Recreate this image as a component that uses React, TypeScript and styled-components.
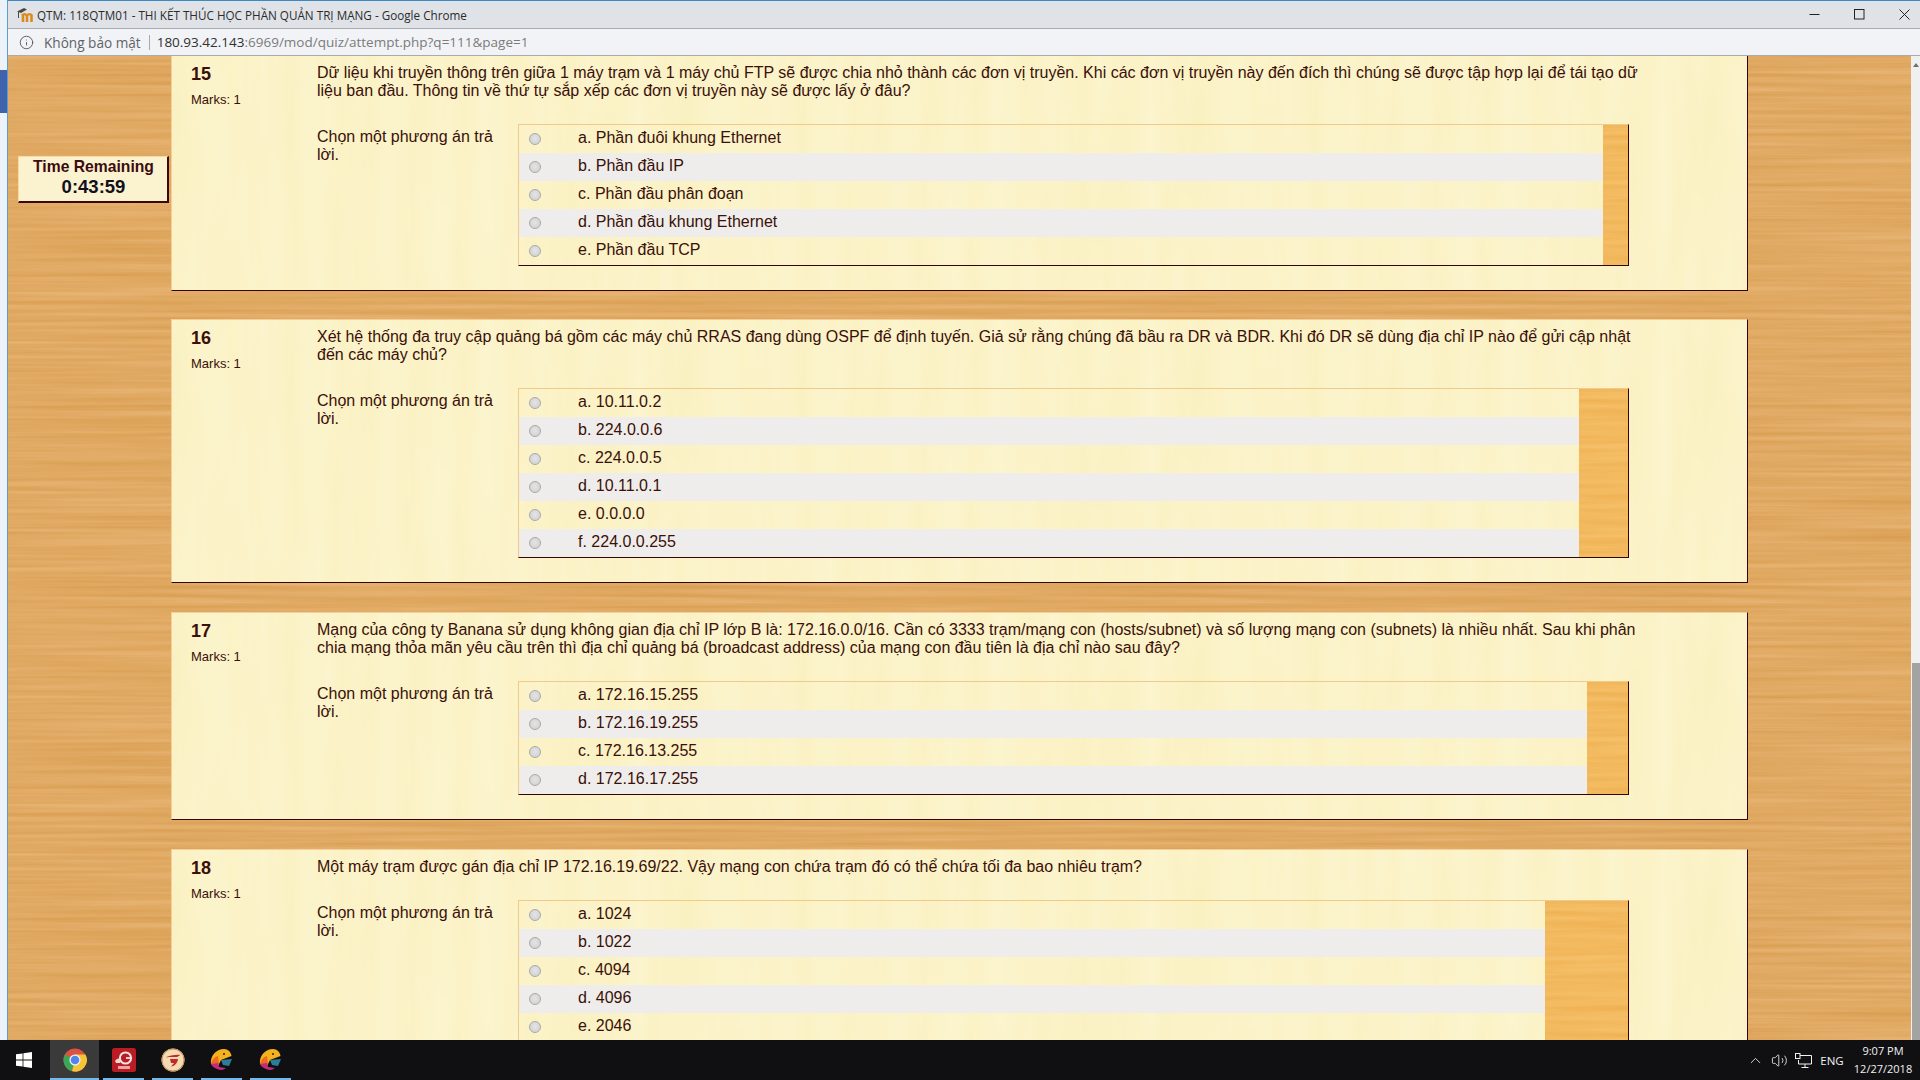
import styled, { createGlobalStyle } from "styled-components";
import { ChevronUp, Info, Volume2 } from "lucide-react";

const svgTexture = (size: number, freq: string, matrix: string, seed: number) =>
  `data:image/svg+xml,${encodeURIComponent(
    `<svg xmlns="http://www.w3.org/2000/svg" width="${size}" height="${size}"><filter id="n" color-interpolation-filters="sRGB" x="0" y="0" width="100%" height="100%"><feTurbulence type="fractalNoise" baseFrequency="${freq}" numOctaves="3" seed="${seed}" stitchTiles="stitch"/><feColorMatrix values="${matrix}"/></filter><rect width="100%" height="100%" filter="url(#n)"/></svg>`
  )}`;

const woodTexture = svgTexture(
  512,
  "0.004 0.22",
  "0.08 0 0 0 0.84  0.12 0 0 0 0.605  0.18 0 0 0 0.3  0 0 0 0 1",
  4
);
const paperTexture = svgTexture(
  512,
  "0.04 0.004",
  "0.012 0 0 0 0.978  0.025 0 0 0 0.938  0.07 0 0 0 0.75  0 0 0 0 1",
  9
);
const fillerTexture = svgTexture(
  256,
  "0.006 0.2",
  "0.04 0 0 0 0.93  0.08 0 0 0 0.685  0.12 0 0 0 0.31  0 0 0 0 1",
  2
);

const GlobalStyle = createGlobalStyle`
  html, body {
    margin: 0;
    padding: 0;
    height: 100%;
    overflow: hidden;
    background: #101012;
  }
`;

const Screen = styled.div`
  width: 1920px;
  height: 1080px;
  display: flex;
  flex-direction: column;
  overflow: hidden;
  font-family: "Liberation Sans", Arial, sans-serif;
`;

const Desk = styled.div`
  flex: 1;
  min-height: 0;
  display: flex;
`;

const DesktopStrip = styled.div`
  width: 7px;
  flex: none;
  background: #edf2f8;
`;

const DesktopPatch = styled.div`
  height: 43px;
  margin-top: 70px;
  background: #3f63ad;
`;

const Window = styled.div`
  flex: 1;
  min-width: 0;
  display: flex;
  flex-direction: column;
  border-top: 1px solid #3b8ac4;
  border-left: 1px solid #5b9fd0;
`;

const TitleBar = styled.div`
  height: 27px;
  flex: none;
  display: flex;
  align-items: center;
  padding-left: 9px;
  background: #dfe3e8;
  border-bottom: 1px solid #a9adb2;
`;

const TitleText = styled.span`
  margin-left: 3px;
  font: 11.7px "Open Sans", sans-serif;
  color: #2b2b2b;
`;

const WindowControls = styled.div`
  margin-left: auto;
  display: flex;
  gap: 13px;
`;

const ControlButton = styled.div`
  width: 32px;
  height: 27px;
  display: flex;
  align-items: center;
  justify-content: center;
`;

const AddressBar = styled.div`
  height: 26px;
  flex: none;
  display: flex;
  align-items: center;
  padding-left: 11px;
  background: #f1f3f6;
  border-bottom: 1px solid #a9abae;
  color: #5f6368;
`;

const SecurityLabel = styled.span`
  margin-left: 10px;
  font: 13.6px "Open Sans", sans-serif;
  color: #5f6368;
`;

const AddressDivider = styled.span`
  width: 1px;
  height: 15px;
  margin: 0 7px 0 8px;
  background: #a8a8a8;
`;

const Url = styled.span`
  font: 13.5px "Open Sans", sans-serif;
  color: #7b7b7b;

  b {
    font-weight: 400;
    color: #303030;
  }
`;

const Viewport = styled.div`
  flex: 1;
  min-height: 0;
  display: flex;
`;

const Page = styled.div`
  position: relative;
  flex: 1;
  min-width: 0;
  overflow: hidden;
  background: #dfa860 url("${woodTexture}");
`;

const Scrollbar = styled.div`
  width: 9px;
  flex: none;
  display: flex;
  flex-direction: column;
  background: #f0f0f0;
`;

const ScrollArrow = styled.div`
  margin: 7px 0 0 2px;
  width: 0;
  height: 0;
  border-left: 3px solid transparent;
  border-right: 3px solid transparent;
  border-bottom: 4px solid #707070;
`;

const ScrollThumb = styled.div`
  margin: auto 0 0 1px;
  height: 377px;
  background: #a3a3a3;
`;

const TimerBox = styled.div`
  position: absolute;
  left: 10px;
  top: 100px;
  width: 151px;
  height: 47px;
  box-sizing: border-box;
  display: flex;
  flex-direction: column;
  align-items: center;
  background: #fbf2cf;
  border-top: 1px solid #f7d9a4;
  border-left: 1px solid #f7d9a4;
  border-right: 2px solid #3c0806;
  border-bottom: 2px solid #3c0806;
  font-weight: 700;
`;

const TimerLabel = styled.div`
  margin: 1px 0 0 1px;
  font-size: 15.7px;
  line-height: 18px;
  color: #3c0c10;
`;

const TimerValue = styled.div`
  margin-left: 1px;
  font-size: 18.5px;
  line-height: 22px;
  color: #101020;
`;

const QuestionList = styled.div`
  display: flex;
  flex-direction: column;
  gap: 29px;
  margin: -1px 0 0 163px;
  width: 1577px;
`;

const Card = styled.section`
  display: flex;
  flex: none;
  padding: 8px 0 24px;
  background: #fbf3c8 url("${paperTexture}");
  border-top: 1px solid #f6cf96;
  border-left: 1px solid #f6cf96;
  border-right: 1px solid #340406;
  border-bottom: 1px solid #340406;
  color: #3a1008;

  &:first-child {
    margin-bottom: -1px;
  }
`;

const CardInfo = styled.div`
  width: 145px;
  flex: none;
  padding-left: 19px;
  box-sizing: border-box;
`;

const Number = styled.div`
  margin-top: -1px;
  font-size: 18px;
  font-weight: 700;
  line-height: 22px;
`;

const Marks = styled.div`
  margin-top: 8px;
  font-size: 13px;
  line-height: 14px;
`;

const CardBody = styled.div`
  flex: 1;
  min-width: 0;
`;

const QuestionText = styled.div<{ $lines: number }>`
  width: 1325px;
  font-size: 16px;
  line-height: 18px;
  min-height: ${(p) => p.$lines * 18}px;
  margin-bottom: 24px;
`;

const AnswerArea = styled.div`
  display: flex;
`;

const Prompt = styled.div`
  width: 201px;
  flex: none;
  box-sizing: border-box;
  padding: 4px 16px 0 0;
  font-size: 16px;
  line-height: 18px;
`;

const AnswerBox = styled.div`
  width: 1111px;
  flex: none;
  display: flex;
  box-sizing: border-box;
  border-top: 1px solid #f3c988;
  border-left: 1px solid #f3c988;
  border-right: 1px solid #340406;
  border-bottom: 1px solid #340406;
`;

const AnswerRows = styled.div<{ $width: number }>`
  width: ${(p) => p.$width}px;
  flex: none;
`;

const AnswerFiller = styled.div`
  flex: 1;
  background: #f2b95f url("${fillerTexture}");
`;

const AnswerRow = styled.div<{ $shaded: boolean }>`
  height: 28px;
  box-sizing: border-box;
  padding-bottom: 2px;
  display: flex;
  align-items: center;
  font-size: 16px;
  background: ${(p) => (p.$shaded ? "#efedeb" : "transparent")};
`;

const Radio = styled.span`
  width: 12px;
  height: 12px;
  margin: 1px 37px 0 10px;
  flex: none;
  box-sizing: border-box;
  border-radius: 50%;
  border: 1px solid #a9a9a9;
  background: radial-gradient(circle at 50% 45%, #e4e4e4, #cfcfcf);
`;

const Taskbar = styled.div`
  height: 40px;
  flex: none;
  display: flex;
  align-items: stretch;
  background: #101012;
  color: #f2f2f2;
`;

const StartButton = styled.div`
  width: 50px;
  flex: none;
  display: flex;
  align-items: center;
  justify-content: center;
  padding-right: 3px;
  box-sizing: border-box;
`;

const TaskItem = styled.div<{ $active?: boolean }>`
  position: relative;
  width: 49px;
  flex: none;
  display: flex;
  align-items: center;
  justify-content: center;
  background: ${(p) => (p.$active ? "#3a3a3a" : "transparent")};

  &::after {
    content: "";
    position: absolute;
    bottom: 0;
    height: 2px;
    left: ${(p) => (p.$active ? 0 : "4px")};
    right: ${(p) => (p.$active ? 0 : "4px")};
    background: #76b9ed;
  }
`;

const Tray = styled.div`
  margin-left: auto;
  display: flex;
  align-items: center;
  padding-right: 5px;
`;

const TraySlot = styled.div<{ $width: number }>`
  width: ${(p) => p.$width}px;
  display: flex;
  justify-content: center;
  align-items: center;
`;

const Lang = styled.span`
  font: 11.5px "Open Sans", sans-serif;
`;

const Clock = styled.div`
  width: 64px;
  margin-left: 2px;
  text-align: center;
  font: 11px/18px "Open Sans", sans-serif;
`;

type QuestionData = {
  number: number;
  text: string;
  lines: number;
  rowsWidth: number;
  answers: string[];
};

const QUESTIONS: QuestionData[] = [
  {
    number: 15,
    text: "Dữ liệu khi truyền thông trên giữa 1 máy trạm và 1 máy chủ FTP sẽ được chia nhỏ thành các đơn vị truyền. Khi các đơn vị truyền này đến đích thì chúng sẽ được tập hợp lại để tái tạo dữ liệu ban đầu. Thông tin về thứ tự sắp xếp các đơn vị truyền này sẽ được lấy ở đâu?",
    lines: 2,
    rowsWidth: 1084,
    answers: [
      "a. Phần đuôi khung Ethernet",
      "b. Phần đầu IP",
      "c. Phần đầu phân đoạn",
      "d. Phần đầu khung Ethernet",
      "e. Phần đầu TCP",
    ],
  },
  {
    number: 16,
    text: "Xét hệ thống đa truy cập quảng bá gồm các máy chủ RRAS đang dùng OSPF để định tuyến. Giả sử rằng chúng đã bầu ra DR và BDR. Khi đó DR sẽ dùng địa chỉ IP nào để gửi cập nhật đến các máy chủ?",
    lines: 2,
    rowsWidth: 1060,
    answers: ["a. 10.11.0.2", "b. 224.0.0.6", "c. 224.0.0.5", "d. 10.11.0.1", "e. 0.0.0.0", "f. 224.0.0.255"],
  },
  {
    number: 17,
    text: "Mạng của công ty Banana sử dụng không gian địa chỉ IP lớp B là: 172.16.0.0/16. Cần có 3333 trạm/mạng con (hosts/subnet) và số lượng mạng con (subnets) là nhiều nhất. Sau khi phân chia mạng thỏa mãn yêu cầu trên thì địa chỉ quảng bá (broadcast address) của mạng con đầu tiên là địa chỉ nào sau đây?",
    lines: 2,
    rowsWidth: 1068,
    answers: ["a. 172.16.15.255", "b. 172.16.19.255", "c. 172.16.13.255", "d. 172.16.17.255"],
  },
  {
    number: 18,
    text: "Một máy trạm được gán địa chỉ IP 172.16.19.69/22. Vậy mạng con chứa trạm đó có thể chứa tối đa bao nhiêu trạm?",
    lines: 1,
    rowsWidth: 1026,
    answers: ["a. 1024", "b. 1022", "c. 4094", "d. 4096", "e. 2046"],
  },
];

const MoodleLogo = () => (
  <svg width="17" height="16" viewBox="0 0 17 16">
    <path d="M6 7v8M10 8v7M14.5 8v7" stroke="#dd8a1c" strokeWidth="2.6" fill="none" />
    <path d="M5 8.5c1.5-1.8 3.5-1.8 5 0 1.5-1.800 3.500-1.800 5 0" stroke="#dd8a1c" strokeWidth="2.2" fill="none" />
    <path d="M0 4.5l7-3.5 3 1.5L4 6z" fill="#4a4a44" />
    <path d="M1.5 5v6" stroke="#4a4a44" strokeWidth="1" />
  </svg>
);

const MinimizeIcon = () => (
  <svg width="11" height="11" viewBox="0 0 11 11">
    <path d="M0.5 5.5h10" stroke="#222" fill="none" />
  </svg>
);

const MaximizeIcon = () => (
  <svg width="11" height="11" viewBox="0 0 11 11">
    <rect x="0.5" y="0.5" width="9.5" height="9.5" stroke="#222" fill="none" />
  </svg>
);

const CloseIcon = () => (
  <svg width="11" height="11" viewBox="0 0 11 11">
    <path d="M0.5 0.5l10 10M10.5 0.5l-10 10" stroke="#222" fill="none" />
  </svg>
);

const WindowsLogo = () => (
  <svg width="16" height="16" viewBox="0 0 16 16">
    <path d="M0 2.3l6.6-.9v6.2H0zM7.4 1.3L16 0v7.6H7.4zM0 8.4h6.6v6.2L0 13.7zM7.4 8.4H16V16l-8.6-1.3z" fill="#fff" />
  </svg>
);

const ChromeIcon = () => (
  <svg width="24" height="24" viewBox="0 0 24 24">
    <circle cx="12" cy="12" r="11.5" fill="#dd5144" />
    <path d="M12 12L1.9 6.6A11.5 11.5 0 0 0 9 23.100z" fill="#3aa757" />
    <path d="M12 6.5h10.4A11.5 11.5 0 0 1 9 23.100L12 12z" fill="#f4c534" />
    <circle cx="12" cy="12" r="5.6" fill="#f1f1f1" />
    <circle cx="12" cy="12" r="4.3" fill="#4f86ec" />
  </svg>
);

const GarenaTile = () => (
  <svg width="24" height="24" viewBox="0 0 24 24">
    <rect width="24" height="24" rx="2.5" fill="#b91c22" />
    <circle cx="13.5" cy="10" r="5.6" fill="none" stroke="#f5e6e6" strokeWidth="2" />
    <path d="M14 10h5" stroke="#f5e6e6" strokeWidth="1.8" />
    <path d="M3 13c2-3 4-3 6-2l-1 4H4z" fill="#f0d8d8" />
    <rect x="6" y="18" width="12" height="3" fill="#e9a5a5" />
  </svg>
);

const GarenaRound = () => (
  <svg width="24" height="24" viewBox="0 0 24 24">
    <circle cx="12" cy="12" r="11.5" fill="#f3dcb4" />
    <circle cx="12" cy="12" r="11" fill="none" stroke="#c58f4c" strokeWidth="1" />
    <path d="M4.5 9.5c4-2 10-3 15-2.5l-3.5 2H8z" fill="#c22a2a" />
    <path d="M9 11h8c-.5 4-3 7-7 7.5l3-3.5h-3z" fill="#c22a2a" />
  </svg>
);

const BuddyIcon = () => (
  <svg width="24" height="24" viewBox="0 0 24 24">
    <path d="M1 16C0 8 6 1 14 1c4 0 7 3 7.5 7L11 12l-3 6z" fill="#f5b21c" />
    <path d="M1 16c.5-3 3-7 7-8l1 8-3 4z" fill="#ef6a20" />
    <path d="M5 20c-2-1-3-2-4-4l7-1 1 4 7 1c-3 3-8 2-11 0z" fill="#c32c7c" />
    <path d="M11 12l11-1-3 7-6-1z" fill="#2b7d9a" />
    <circle cx="14" cy="6" r="1" fill="#222" />
  </svg>
);

const NetworkIcon = () => (
  <svg width="17" height="15" viewBox="0 0 17 15" fill="none" stroke="#f2f2f2">
    <path d="M4.5 2.5h12V11h-13V7" />
    <path d="M10 11v3M6.5 14.5h7" />
    <rect x="0.5" y="0.5" width="4.5" height="5" fill="#101012" />
  </svg>
);

const Question = ({ number, text, lines, rowsWidth, answers }: QuestionData) => (
  <Card>
    <CardInfo>
      <Number>{number}</Number>
      <Marks>Marks: 1</Marks>
    </CardInfo>
    <CardBody>
      <QuestionText $lines={lines}>{text}</QuestionText>
      <AnswerArea>
        <Prompt>Chọn một phương án trả lời.</Prompt>
        <AnswerBox>
          <AnswerRows $width={rowsWidth}>
            {answers.map((answer, index) => (
              <AnswerRow key={answer} $shaded={index % 2 === 1}>
                <Radio />
                {answer}
              </AnswerRow>
            ))}
          </AnswerRows>
          <AnswerFiller />
        </AnswerBox>
      </AnswerArea>
    </CardBody>
  </Card>
);

const App = () => (
  <Screen>
    <GlobalStyle />
    <Desk>
      <DesktopStrip>
        <DesktopPatch />
      </DesktopStrip>
      <Window>
        <TitleBar>
          <MoodleLogo />
          <TitleText>QTM: 118QTM01 - THI KẾT THÚC HỌC PHẦN QUẢN TRỊ MẠNG - Google Chrome</TitleText>
          <WindowControls>
            <ControlButton>
              <MinimizeIcon />
            </ControlButton>
            <ControlButton>
              <MaximizeIcon />
            </ControlButton>
            <ControlButton>
              <CloseIcon />
            </ControlButton>
          </WindowControls>
        </TitleBar>
        <AddressBar>
          <Info size={15} strokeWidth={1.6} />
          <SecurityLabel>Không bảo mật</SecurityLabel>
          <AddressDivider />
          <Url>
            <b>180.93.42.143</b>:6969/mod/quiz/attempt.php?q=111&amp;page=1
          </Url>
        </AddressBar>
        <Viewport>
          <Page>
            <TimerBox>
              <TimerLabel>Time Remaining</TimerLabel>
              <TimerValue>0:43:59</TimerValue>
            </TimerBox>
            <QuestionList>
              {QUESTIONS.map((question) => (
                <Question key={question.number} {...question} />
              ))}
            </QuestionList>
          </Page>
          <Scrollbar>
            <ScrollArrow />
            <ScrollThumb />
          </Scrollbar>
        </Viewport>
      </Window>
    </Desk>
    <Taskbar>
      <StartButton>
        <WindowsLogo />
      </StartButton>
      <TaskItem $active>
        <ChromeIcon />
      </TaskItem>
      <TaskItem>
        <GarenaTile />
      </TaskItem>
      <TaskItem>
        <GarenaRound />
      </TaskItem>
      <TaskItem>
        <BuddyIcon />
      </TaskItem>
      <TaskItem>
        <BuddyIcon />
      </TaskItem>
      <Tray>
        <TraySlot $width={24}>
          <ChevronUp size={17} strokeWidth={1.2} />
        </TraySlot>
        <TraySlot $width={24}>
          <Volume2 size={17} strokeWidth={1.2} />
        </TraySlot>
        <TraySlot $width={24}>
          <NetworkIcon />
        </TraySlot>
        <TraySlot $width={34}>
          <Lang>ENG</Lang>
        </TraySlot>
        <Clock>
          9:07 PM
          <br />
          12/27/2018
        </Clock>
      </Tray>
    </Taskbar>
  </Screen>
);

export default App;
